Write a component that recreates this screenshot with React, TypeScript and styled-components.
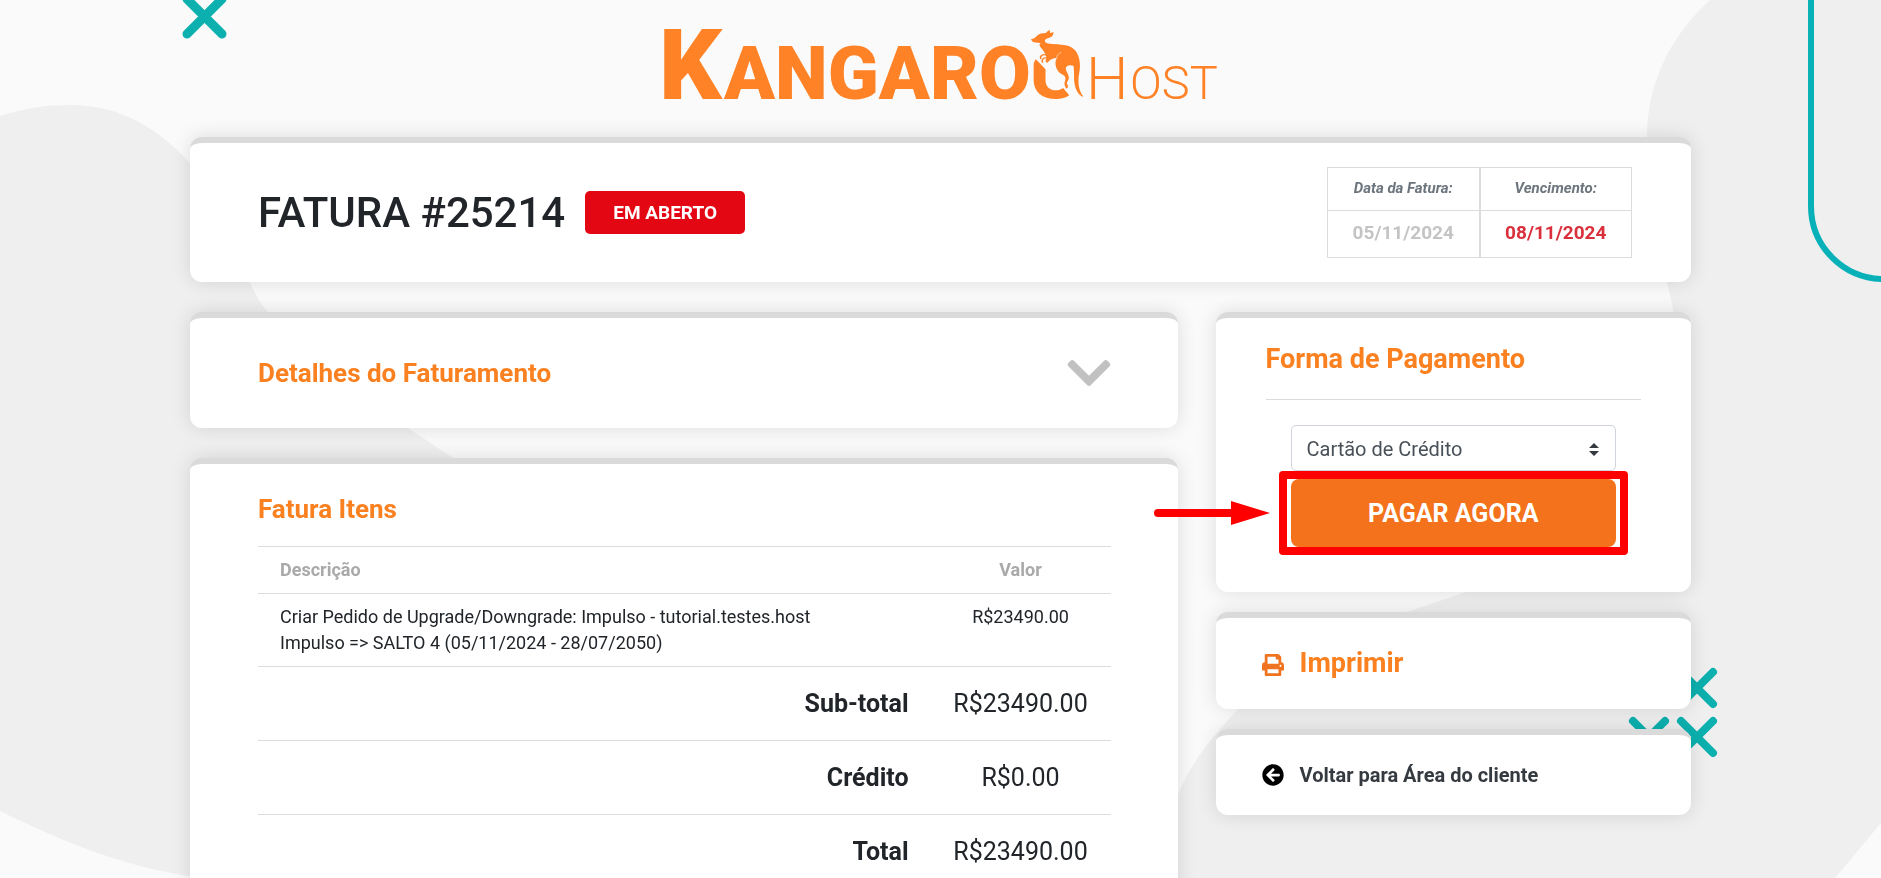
import React from "react";
import styled, { createGlobalStyle } from "styled-components";
import { FaArrowCircleLeft, FaChevronDown, FaPrint } from "react-icons/fa";

const GlobalStyle = createGlobalStyle`
  *, *::before, *::after { box-sizing: border-box; }
  body {
    margin: 0;
    background: #fafafa;
    color: #212529;
    font-family: Roboto, "Liberation Sans", sans-serif;
  }
`;

const Backdrop = styled.svg`
  position: fixed;
  inset: 0;
  z-index: -1;
  width: 100%;
  height: 100vh;
`;

const Page = styled.div`
  max-width: 1501px;
  margin: 0 auto;
  padding-bottom: 40px;
`;

const Header = styled.header`
  display: flex;
  justify-content: center;
  padding: 20px 0 33px;
`;

const Logo = styled.svg`
  display: block;
  width: 568px;
  max-width: 100%;
  fill: #ff8226;
`;

const Card = styled.section`
  background: #fff;
  border-top: 6px solid #dadada;
  border-radius: 12px;
  box-shadow: 0 0 20px rgba(0, 0, 0, 0.12);
`;

const SummaryCard = styled(Card)`
  display: flex;
  flex-wrap: wrap;
  align-items: center;
  justify-content: space-between;
  gap: 20px;
  padding: 24px 59px 24px 68px;
`;

const TitleGroup = styled.div`
  display: flex;
  align-items: center;
  gap: 20px;
`;

const Title = styled.h1`
  margin: 0;
  font-size: 42px;
  line-height: 50px;
  font-weight: 500;
`;

const Status = styled.span`
  padding: 0 28px;
  border-radius: 5px;
  background: #e30613;
  color: #fff;
  font-size: 19px;
  line-height: 43px;
  font-weight: 700;
`;

const DateTable = styled.table`
  width: 305px;
  table-layout: fixed;
  border-spacing: 0;
  text-align: center;
`;

const DateLabel = styled.th`
  padding: 10px 0 12px;
  border: 1px solid #dcdcdc;
  color: #6c757d;
  font-size: 15px;
  line-height: 20px;
  font-style: italic;
  font-weight: 700;
`;

const DateValue = styled.td<{ $due?: boolean }>`
  padding: 9px 0 11px;
  border: 1px solid #dcdcdc;
  border-top: 0;
  color: ${(p) => (p.$due ? "#d9303c" : "#c4c4c4")};
  font-size: 19px;
  line-height: 26px;
  font-weight: 700;
`;

const Columns = styled.div`
  display: grid;
  grid-template-columns: minmax(0, 27fr) minmax(0, 13fr);
  column-gap: 38px;
  align-items: start;
  margin-top: 30px;
`;

const Stack = styled.div<{ $gap: number }>`
  display: flex;
  flex-direction: column;
  gap: ${(p) => p.$gap}px;
`;

const Heading = styled.h2<{ $large?: boolean }>`
  margin: 0;
  color: #fa8020;
  font-size: ${(p) => (p.$large ? 27 : 26)}px;
  line-height: 40px;
  font-weight: 700;
`;

const Disclosure = styled.button`
  display: flex;
  align-items: center;
  justify-content: space-between;
  width: 100%;
  padding: 35px 67px 35px 68px;
  border: 0;
  background: none;
  font-family: inherit;
  cursor: pointer;
`;

const Chevron = styled(FaChevronDown)`
  width: 44px;
  height: 50px;
  color: #c1c1c1;
`;

const ChevronBox = styled.span`
  display: flex;
  align-items: center;
  height: 40px;
`;

const ItemsCard = styled(Card)`
  padding: 25px 67px 40px 68px;
`;

const ItemsTable = styled.table`
  width: 100%;
  margin-top: 17px;
  border-spacing: 0;
`;

const AmountCol = styled.col`
  width: 180px;
`;

const ItemHead = styled.th<{ $align: string }>`
  padding: 10px 22px;
  border-top: 1px solid #dcdcdc;
  color: #a9a9a9;
  font-size: 18px;
  line-height: 26px;
  font-weight: 700;
  text-align: ${(p) => p.$align};
`;

const ItemCell = styled.td<{ $align: string }>`
  padding: 10px 22px;
  border-top: 1px solid #dcdcdc;
  font-size: 18px;
  line-height: 26px;
  text-align: ${(p) => p.$align};
  vertical-align: top;
`;

const TotalLabel = styled.th`
  padding: 18px 22px;
  border-top: 1px solid #dcdcdc;
  font-size: 25px;
  line-height: 37px;
  font-weight: 700;
  text-align: right;
`;

const TotalValue = styled.td`
  padding: 18px 0;
  border-top: 1px solid #dcdcdc;
  font-size: 25px;
  line-height: 37px;
  text-align: center;
`;

const PaymentCard = styled(Card)`
  padding: 21px 50px 45px;
`;

const Rule = styled.hr`
  margin: 20px 0 25px;
  border: 0;
  border-top: 1px solid #dcdcdc;
`;

const PaymentForm = styled.form`
  display: flex;
  flex-direction: column;
  gap: 8px;
  padding: 0 25px;
`;

const SelectField = styled.label`
  position: relative;
  display: block;
`;

const Select = styled.select`
  appearance: none;
  display: block;
  width: 100%;
  height: 46px;
  padding: 2px 40px 0 15px;
  border: 1px solid #ced4da;
  border-radius: 5px;
  background: #fff;
  color: #495057;
  font-family: inherit;
  font-size: 20px;
`;

const SelectCaret = styled.svg`
  position: absolute;
  top: 18px;
  right: 17px;
  width: 10px;
  height: 13px;
  fill: #343a40;
  pointer-events: none;
`;

const PayWrap = styled.div`
  position: relative;
`;

const PayButton = styled.button`
  display: block;
  width: 100%;
  height: 68px;
  border: 0;
  border-radius: 8px;
  background: #f4721b;
  color: #fff;
  font-family: inherit;
  font-size: 25px;
  font-weight: 700;
  cursor: pointer;
`;

const Highlight = styled.span`
  position: absolute;
  inset: -8px -12px;
  border: 8px solid #f00;
  border-radius: 4px;
  pointer-events: none;
`;

const Arrow = styled.svg`
  position: absolute;
  top: 22px;
  right: calc(100% + 21px);
  width: 116px;
  height: 24px;
  pointer-events: none;
`;

const LinkCard = styled(Card)`
  padding: 25px 46px;
`;

const ActionLink = styled.a<{ $back?: boolean }>`
  display: block;
  color: ${(p) => (p.$back ? "#343a40" : "#fa8020")};
  font-size: ${(p) => (p.$back ? 20 : 27)}px;
  line-height: ${(p) => (p.$back ? 30 : 41)}px;
  font-weight: 700;
  text-decoration: none;

  svg {
    width: 22px;
    height: 22px;
    margin-right: 16px;
    vertical-align: -4px;
    color: ${(p) => (p.$back ? "#000" : "#f0731f")};
  }
`;

const totals = [
  { label: "Sub-total", value: "R$23490.00" },
  { label: "Crédito", value: "R$0.00" },
  { label: "Total", value: "R$23490.00" },
];

function PageBackdrop() {
  return (
    <Backdrop viewBox="0 0 1881 878" preserveAspectRatio="xMidYMid slice" aria-hidden="true">
      <g fill="#efefef">
        <path d="M0 116C25 108 47 105 70 105C122 105 160 130 190 163C222 198 236 245 250 282C256 296 262 306 268 312C300 358 350 392 408 428L453 458C600 560 560 878 240 878C220 878 205 878 190 876C120 866 60 840 0 811Z" />
        <path d="M1710 0C1669 37 1647 85 1647 137C1647 190 1660 240 1667 282C1671 300 1673 306 1673 312C1690 430 1640 530 1466 592L1407 612C1330 636 1272 670 1238 709C1205 745 1190 765 1177 797C1165 825 1160 850 1160 878H1835L1881 823V0Z" />
      </g>
      <path d="M1811 -5V206C1811 247 1844 279 1884 279" fill="none" stroke="#08b0b7" strokeWidth="6" />
      <g stroke="#0cb0ae" strokeWidth="9" strokeLinecap="round">
        <path d="M187 -1L222 34M222 -1L187 34" />
        <path d="M1681 672L1713 704M1713 672L1681 704" strokeWidth="8" />
        <path d="M1681 721L1713 753M1713 721L1681 753" strokeWidth="8" />
        <path d="M1633 721L1665 753M1665 721L1633 753" strokeWidth="8" />
      </g>
    </Backdrop>
  );
}

function BrandLogo() {
  return (
    <Logo viewBox="656 20 568 84" overflow="visible" role="img" aria-label="Kangaroo Host">
      <g fontFamily="Roboto, sans-serif">
        <text x="658" y="99" fontSize="98" fontWeight="900">K</text>
        <text x="723" y="99" fontSize="75" fontWeight="900">ANGARO</text>
        <text x="1085" y="99" fontSize="60" fontWeight="300">H</text>
        <text x="1129" y="99" fontSize="47" fontWeight="300">OST</text>
      </g>
      <g transform="translate(640 0) scale(0.3827 0.3333)">
        <path d="M1032 178C1028 183 1026 188 1026 196V240C1026 276 1048 297 1085 297C1098 297 1110 294 1119 286L1103 264C1097 269 1091 271 1085 271C1068 271 1057 260 1057 240V208Z" />
        <path d="M1019 118C1025 116 1030 114 1034 108C1040 101 1049 99 1058 99C1061 94 1065 92 1068 90L1069 99C1072 98 1075 97 1078 97C1078 107 1073 113 1065 114C1060 115 1055 118 1055 124C1057 130 1064 132 1076 132C1092 133 1107 134 1118 138C1139 148 1147 170 1147 198C1147 214 1143 226 1143 241C1143 262 1147 277 1156 291C1144 287 1136 271 1133 253C1130 236 1133 215 1130 197C1121 194 1111 195 1110 205C1110 215 1118 222 1118 234C1118 241 1112 245 1113 251C1117 257 1117 263 1112 266C1107 260 1106 253 1107 246C1110 238 1110 232 1106 227C1092 220 1083 207 1083 190C1083 184 1084 179 1086 174C1078 175 1073 177 1069 180L1062 188C1058 188 1055 182 1060 174C1058 161 1052 152 1045 143C1041 138 1040 134 1044 129C1035 128 1028 129 1022 124Z" />
        <path d="M1059 165C1049 161 1041 169 1045 177M1062 173C1050 172 1045 180 1050 188" fill="none" stroke="#ff8226" strokeWidth="4" />
        <path d="M1098 157C1089 161 1086 168 1086 176" fill="none" stroke="#fafafa" strokeWidth="1.5" />
      </g>
    </Logo>
  );
}

export default function App() {
  return (
    <>
      <GlobalStyle />
      <PageBackdrop />
      <Page>
        <Header>
          <BrandLogo />
        </Header>
        <main>
          <SummaryCard>
            <TitleGroup>
              <Title>FATURA #25214</Title>
              <Status>EM ABERTO</Status>
            </TitleGroup>
            <DateTable>
              <thead>
                <tr>
                  <DateLabel scope="col">Data da Fatura:</DateLabel>
                  <DateLabel scope="col">Vencimento:</DateLabel>
                </tr>
              </thead>
              <tbody>
                <tr>
                  <DateValue>05/11/2024</DateValue>
                  <DateValue $due>08/11/2024</DateValue>
                </tr>
              </tbody>
            </DateTable>
          </SummaryCard>
          <Columns>
            <Stack $gap={30}>
              <Card>
                <Disclosure type="button" aria-expanded="false">
                  <Heading as="span">Detalhes do Faturamento</Heading>
                  <ChevronBox>
                    <Chevron aria-hidden="true" />
                  </ChevronBox>
                </Disclosure>
              </Card>
              <ItemsCard>
                <Heading>Fatura Itens</Heading>
                <ItemsTable>
                  <colgroup>
                    <col />
                    <AmountCol />
                  </colgroup>
                  <thead>
                    <tr>
                      <ItemHead scope="col" $align="left">Descrição</ItemHead>
                      <ItemHead scope="col" $align="center">Valor</ItemHead>
                    </tr>
                  </thead>
                  <tbody>
                    <tr>
                      <ItemCell $align="left">
                        Criar Pedido de Upgrade/Downgrade: Impulso - tutorial.testes.host
                        <br />
                        {"Impulso => SALTO 4 (05/11/2024 - 28/07/2050)"}
                      </ItemCell>
                      <ItemCell $align="center">R$23490.00</ItemCell>
                    </tr>
                    {totals.map((t) => (
                      <tr key={t.label}>
                        <TotalLabel scope="row">{t.label}</TotalLabel>
                        <TotalValue>{t.value}</TotalValue>
                      </tr>
                    ))}
                  </tbody>
                </ItemsTable>
              </ItemsCard>
            </Stack>
            <Stack $gap={20}>
              <PaymentCard>
                <Heading $large>Forma de Pagamento</Heading>
                <Rule />
                <PaymentForm onSubmit={(e) => e.preventDefault()}>
                  <SelectField>
                    <Select aria-label="Forma de Pagamento" defaultValue="card">
                      <option value="card">Cartão de Crédito</option>
                    </Select>
                    <SelectCaret viewBox="0 0 10 13" aria-hidden="true">
                      <path d="M0 5L5 0L10 5ZM0 8H10L5 13Z" />
                    </SelectCaret>
                  </SelectField>
                  <PayWrap>
                    <PayButton type="submit">PAGAR AGORA</PayButton>
                    <Highlight />
                    <Arrow viewBox="0 0 116 24" aria-hidden="true">
                      <path d="M4 12H80" stroke="#f00" strokeWidth="8" strokeLinecap="round" />
                      <path d="M77 0L116 12L77 24Z" fill="#f00" />
                    </Arrow>
                  </PayWrap>
                </PaymentForm>
              </PaymentCard>
              <LinkCard>
                <ActionLink href="#imprimir">
                  <FaPrint aria-hidden="true" />
                  Imprimir
                </ActionLink>
              </LinkCard>
              <LinkCard>
                <ActionLink href="#area-do-cliente" $back>
                  <FaArrowCircleLeft aria-hidden="true" />
                  Voltar para Área do cliente
                </ActionLink>
              </LinkCard>
            </Stack>
          </Columns>
        </main>
      </Page>
    </>
  );
}
